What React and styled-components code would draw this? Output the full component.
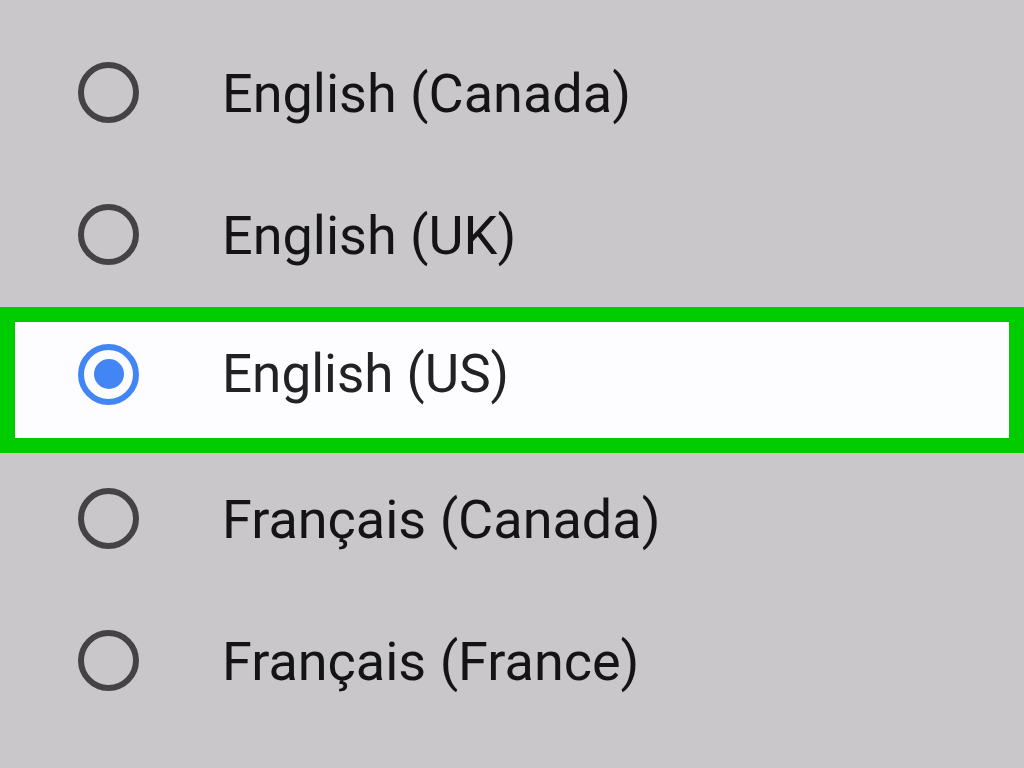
import React from "react";
import styled, { createGlobalStyle } from "styled-components";

const Global = createGlobalStyle`
  html, body { margin: 0; padding: 0; background: #c9c7ca; }
  body { font-family: Roboto, "Noto Sans", sans-serif; }
`;

const Screen = styled.div`
  width: 1024px;
  height: 768px;
  background: #c9c7ca;
  display: flex;
  flex-direction: column;
  padding-top: 21px;
  box-sizing: border-box;
  overflow: hidden;
`;

const Row = styled.div`
  height: 142px;
  flex-shrink: 0;
  display: flex;
  align-items: center;
  box-sizing: border-box;
  padding-left: 78px;

  &[data-selected="true"] {
    height: 146px;
    margin: 2px 0 -6px 0;
    padding-left: 63px;
    padding-bottom: 12px;
    background: #fdfcff;
    border: 15px solid #00cc00;
  }
`;

const Radio = styled.div`
  width: 61px;
  height: 61px;
  border-radius: 50%;
  box-sizing: border-box;
  border: 6px solid ${(p) => (p.$checked ? "#4285f4" : "#434345")};
  display: flex;
  align-items: center;
  justify-content: center;
  flex-shrink: 0;
`;

const Dot = styled.div`
  width: 30px;
  height: 30px;
  border-radius: 50%;
  background: #4285f4;
`;

const Label = styled.span`
  margin-left: 83px;
  font-size: ${(p) => (p.$selected ? "53px" : "54px")};
  color: ${(p) => (p.$selected ? "#222224" : "#141416")};
  transform: translateY(${(p) => (p.$selected ? "0" : "1px")});
`;

const items = [
  "English (Canada)",
  "English (UK)",
  "English (US)",
  "Français (Canada)",
  "Français (France)",
];

export default function App() {
  return (
    <Screen>
      <Global />
      {items.map((t) => {
        const sel = t === "English (US)";
        return (
          <Row key={t} data-selected={sel}>
            <Radio $checked={sel}>{sel && <Dot />}</Radio>
            <Label $selected={sel}>{t}</Label>
          </Row>
        );
      })}
    </Screen>
  );
}
